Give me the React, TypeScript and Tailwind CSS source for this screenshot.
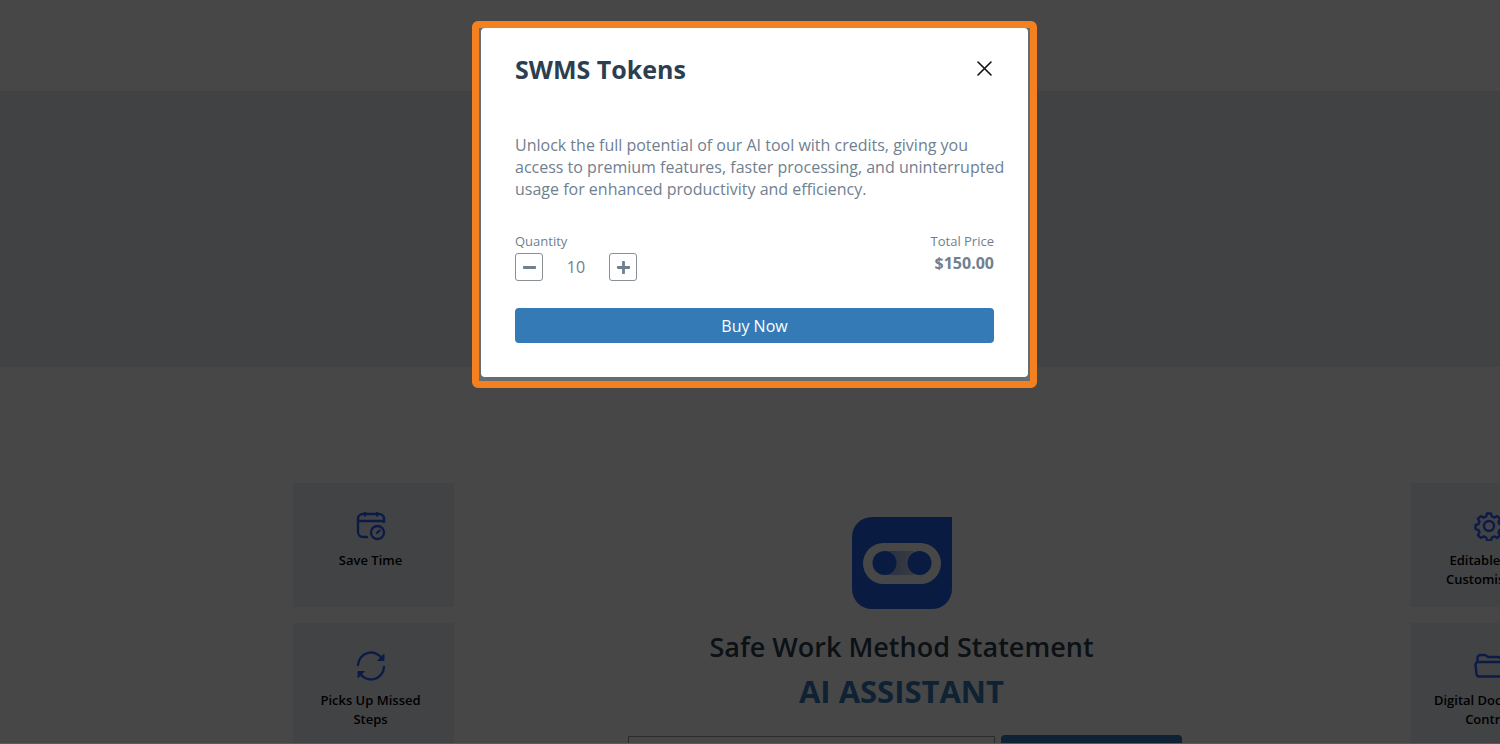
import { ReactNode, useState } from "react";
import { FaMinus, FaPlus } from "react-icons/fa";

const TOKEN_PRICE = 15;

interface FeatureCardProps {
  icon: ReactNode;
  label: string;
}

function FeatureCard(props: FeatureCardProps) {
  return (
    <div className="flex h-[124px] flex-col items-center bg-[#ebf1f8] pt-[26px] pr-[18px] pl-3">
      {props.icon}
      <p className="mt-2.5 text-center text-[13px] leading-[19px] font-semibold text-black">
        {props.label}
      </p>
    </div>
  );
}

const iconProps = {
  width: 32,
  height: 32,
  viewBox: "0 0 32 32",
  fill: "none",
  stroke: "currentColor",
  strokeWidth: 2.4,
  strokeLinecap: "round" as const,
  strokeLinejoin: "round" as const,
  className: "shrink-0 text-[#2f5fff]",
};

function CalendarIcon() {
  return (
    <svg {...iconProps}>
      <path d="M12 28H8a5 5 0 0 1-5-5V10a5 5 0 0 1 5-5h16a5 5 0 0 1 5 5v3" />
      <path d="M3 12h26M10 4v2.500M22 4v2.500" />
      <circle cx="22.5" cy="23.500" r="6.5" />
      <path d="M22 24l2.500-2.500" />
    </svg>
  );
}

function RefreshIcon() {
  return (
    <svg {...iconProps}>
      <path d="M3 16A13 13 0 0 1 27.5 10.5" />
      <path d="M29 5.500v6h-6z" fill="currentColor" strokeWidth={1} />
      <path d="M29 18A13 13 0 0 1 4.5 23.5" />
      <path d="M3 28.500v-6h6z" fill="currentColor" strokeWidth={1} />
    </svg>
  );
}

function GearIcon() {
  return (
    <svg {...iconProps}>
      <circle cx="16" cy="17" r="5" />
      <path d="M14 4.500h4l.8 3 2.600 1.100 2.800-1.600 2.900 2.900-1.600 2.800 1.100 2.500 2.900.8v4l-2.900.8-1.100 2.500 1.600 2.800-2.900 2.900-2.800-1.600-2.600 1.100-.8 3h-4l-.8-3-2.600-1.100-2.800 1.600-2.900-2.900 1.600-2.800-1.100-2.500-2.900-.8v-4l2.900-.8 1.100-2.500-1.600-2.800 2.900-2.900 2.800 1.600 2.600-1.100z" />
    </svg>
  );
}

function FolderIcon() {
  return (
    <svg {...iconProps}>
      <path d="M4.500 13V9a3 3 0 0 1 3-3h4.500l3 2H25a3 3 0 0 1 3 3v2" />
      <path d="M5 13h22a3 3 0 0 1 2.500 3l-1 9a3 3 0 0 1-3 2.500h-19a3 3 0 0 1-3-2.500l-1-9A3 3 0 0 1 5 13z" />
    </svg>
  );
}

function BotLogo() {
  return (
    <svg width="100" height="92" viewBox="0 0 100 92">
      <defs>
        <linearGradient id="visor">
          <stop offset="0.300" stopColor="#a3b4ea" />
          <stop offset="1" stopColor="#d0d8f0" />
        </linearGradient>
      </defs>
      <path
        d="M20 0H100V72A20 20 0 0 1 80 92H20A20 20 0 0 1 0 72V20A20 20 0 0 1 20 0z"
        fill="#2563eb"
      />
      <rect x="11" y="26" width="78" height="41" rx="20.500" fill="#ffffff" />
      <rect x="32" y="34" width="30" height="24" fill="url(#visor)" />
      <circle cx="32.500" cy="46" r="12" fill="#2563eb" />
      <circle cx="67.500" cy="46" r="12" fill="#2563eb" />
    </svg>
  );
}

function Page() {
  return (
    <div aria-hidden="true">
      <header className="h-[91px] bg-white" />
      <div className="h-[276px] bg-[#e8ecf3]" />
      <main className="-mr-[72px] flex pt-[116px] pl-[293px]">
        <div className="flex w-[161px] shrink-0 flex-col gap-4">
          <FeatureCard icon={<CalendarIcon />} label="Save Time" />
          <FeatureCard icon={<RefreshIcon />} label="Picks Up Missed Steps" />
        </div>
        <div className="flex grow flex-col items-center pt-[34px] pr-[62px]">
          <BotLogo />
          <h1 className="mt-4 text-center text-[27px] leading-[44px] font-semibold text-[#2c3e50]">
            Safe Work Method Statement
            <span className="block text-[31px] font-bold text-[#337ab7]">
              AI ASSISTANT
            </span>
          </h1>
          <form className="mt-[22px] flex gap-1.5 pl-1.5">
            <input
              type="text"
              aria-label="Work activity"
              tabIndex={-1}
              className="mt-px h-10 w-[367px] border border-[#999999] bg-white px-3"
            />
            <button
              type="button"
              aria-label="Generate"
              tabIndex={-1}
              className="h-10 w-[181px] rounded bg-[#337ab7]"
            />
          </form>
        </div>
        <div className="flex w-[161px] shrink-0 flex-col gap-4">
          <FeatureCard icon={<GearIcon />} label="Editable and Customisable" />
          <FeatureCard icon={<FolderIcon />} label="Digital Document Control" />
        </div>
      </main>
    </div>
  );
}

function TokensDialog() {
  const [quantity, setQuantity] = useState(10);

  const onMinusClick = () => {
    setQuantity(Math.max(1, quantity - 1));
  };

  const onPlusClick = () => {
    setQuantity(quantity + 1);
  };

  return (
    <div className="w-[565px] rounded-md border-7 border-[#f58020] bg-[#666d72] px-0.5 pb-1">
      <div
        role="dialog"
        aria-labelledby="tokens-title"
        className="rounded-sm bg-white px-[34px] pt-[23px] pb-[34px] text-[#708090]"
      >
        <div className="flex items-center justify-between">
          <h2
            id="tokens-title"
            className="text-[25px] leading-9 font-bold text-[#2c3e50]"
          >
            SWMS Tokens
          </h2>
          <button type="button" aria-label="Close" className="text-[#111111]">
            <svg
              width="20"
              height="20"
              viewBox="0 0 20 20"
              stroke="currentColor"
              strokeWidth="1.600"
              strokeLinecap="round"
            >
              <path d="M4 3l13 13M17 3l-13 13" />
            </svg>
          </button>
        </div>
        <p className="mt-[47px] -mr-4 text-[16px] leading-[22px]">
          Unlock the full potential of our AI tool with credits, giving you
          access to premium features, faster processing, and uninterrupted usage
          for enhanced productivity and efficiency.
        </p>
        <div className="mt-[31px] flex justify-between">
          <div>
            <p className="text-[13px] leading-5">Quantity</p>
            <div className="mt-0.5 flex items-center">
              <button
                type="button"
                aria-label="Decrease quantity"
                onClick={onMinusClick}
                className="flex size-7 items-center justify-center rounded-[3px] border border-[#8a8f94]"
              >
                <FaMinus size={15} />
              </button>
              <span className="w-[66px] text-center text-[16px]">
                {quantity}
              </span>
              <button
                type="button"
                aria-label="Increase quantity"
                onClick={onPlusClick}
                className="flex size-7 items-center justify-center rounded-[3px] border border-[#8a8f94]"
              >
                <FaPlus size={15} />
              </button>
            </div>
          </div>
          <div className="text-right">
            <p className="text-[13px] leading-5">Total Price</p>
            <p className="text-[16px] leading-6 font-bold">
              ${(quantity * TOKEN_PRICE).toFixed(2)}
            </p>
          </div>
        </div>
        <button
          type="button"
          className="mt-[27px] h-[35px] w-full rounded bg-[#337ab7] text-[16px] font-medium text-white"
        >
          Buy Now
        </button>
      </div>
    </div>
  );
}

export default function App() {
  return (
    <div className="h-screen overflow-hidden bg-white font-['Open_Sans',sans-serif]">
      <Page />
      <div className="fixed inset-0 flex items-start justify-center border-b border-[#5c5a5d] bg-black/72 pt-[21px] pl-[9px]">
        <TokensDialog />
      </div>
    </div>
  );
}
